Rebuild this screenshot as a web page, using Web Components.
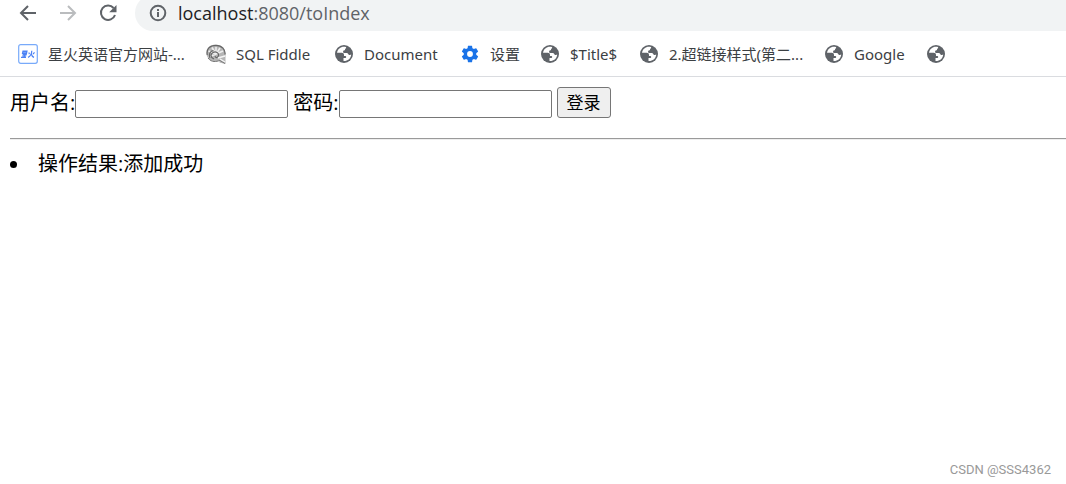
<!DOCTYPE html>
<html lang="zh-CN">
<head>
<meta charset="utf-8">
<title>localhost:8080/toIndex</title>
<style>
html, body { margin: 0; height: 100%; background: #fff; }
body { font-family: "Noto Sans", "Noto Sans CJK SC", sans-serif; }
</style>
</head>
<body>
<browser-window></browser-window>
<script>
const define = (name, html) => customElements.define(name, class extends HTMLElement {
  constructor() {
    super();
    this.attachShadow({ mode: "open" }).innerHTML = html;
  }
});

const icons = {
  back: '<svg viewBox="0 0 20 20"><path d="M18 10H3M10 3L3 10l7 7" fill="none" stroke="#5f6368" stroke-width="2"/></svg>',
  forward: '<svg viewBox="0 0 20 20"><path d="M2 10h15M10 3l7 7-7 7" fill="none" stroke="#babcbe" stroke-width="2"/></svg>',
  reload: '<svg viewBox="0 0 20 20"><path d="M15.600 5A7.200 7.200 0 1 0 17 12" fill="none" stroke="#5f6368" stroke-width="2"/><path d="M18.500 2v7.300h-7.300z" fill="#5f6368"/></svg>',
  info: '<svg viewBox="0 0 20 20"><circle cx="10" cy="10" r="7.300" fill="none" stroke="#5f6368" stroke-width="2"/><path d="M10 9v5M10 6v2" stroke="#5f6368" stroke-width="2"/></svg>',
  globe: '<svg viewBox="0 0 20 20"><circle cx="10" cy="10" r="9" fill="#5f6368"/><path d="M12 3C7.500 1.800 3.800 4.500 3 8.700h4.700c1.500 0 2.300.9 2.300 2.300v1h1.300c.6 0 .9.400.9 1s-.3 1-.9 1H9.500v3.100c4.300.2 7.600-2.700 7.700-6.500-.8.700-2 .6-2.700-.2-.6-.8-1.200-1.300-2.200-1.300h-1.800c-.9 0-1.400-.6-1.400-1.400 0-1 .6-1.500 1.500-1.500h.4V5.400c0-.6.300-.9.800-.9.400-.3.500-.9.200-1.500z" fill="#fff"/></svg>',
  gear: '<svg viewBox="0 0 24 24"><path fill="#1a73e8" d="M19.430 12.980c.040-.320.070-.640.070-.980s-.030-.660-.070-.980l2.110-1.650c.190-.150.240-.420.120-.640l-2-3.460c-.120-.220-.390-.300-.610-.220l-2.490 1c-.520-.400-1.080-.730-1.690-.980l-.380-2.650A.49.49 0 0 0 14 2h-4c-.250 0-.460.180-.490.420l-.380 2.650c-.610.250-1.170.590-1.690.980l-2.490-1c-.230-.090-.490 0-.610.220l-2 3.460c-.130.220-.070.490.120.640l2.110 1.650c-.040.320-.070.650-.070.980s.030.660.070.980l-2.110 1.650c-.190.150-.240.420-.120.640l2 3.460c.120.220.390.300.610.220l2.490-1c.520.400 1.080.730 1.690.980l.380 2.650c.030.240.240.420.490.420h4c.250 0 .460-.180.490-.420l.380-2.650c.610-.250 1.170-.590 1.690-.980l2.490 1c.230.090.490 0 .610-.220l2-3.460c.120-.220.070-.490-.120-.640zM12 15.500a3.500 3.500 0 1 1 0-7 3.500 3.500 0 0 1 0 7z"/></svg>',
  star: '<svg viewBox="0 0 20 20"><rect x=".7" y=".7" width="18.600" height="18.600" rx="2" fill="#fff" stroke="#78aafa" stroke-width="1.200"/><g fill="none" stroke="#4c82f5" stroke-width="1.200"><path d="M5 7h4l-.5 2.500h-4zM4.800 8.200h4M4.600 10.700h4.200M4.200 12h4M3 13.300h5M6.800 9.500l-.7 3.800M11 8.500l.3 1.700M16.500 8.300l-1.500 1.800M13.800 6.700q-.2 4.800-3.800 6.700M13.300 10q.7 2.600 2.700 3.400"/></g></svg>',
  shell: '<svg viewBox="0 0 20 20"><path d="M.8 11C-.8 4 4 .5 10 .8c7 .2 10 5 9.500 10V20l-6-1.500v-1.800C8 18.500 2 17 .8 11z" fill="#b5b5b5"/><path d="M10 10L2.500 7M10 10l-7 3M10 10L6 3.500M10 10V3M10 10l4-6M10 10l7-3" stroke="#eee" stroke-width="1.600"/><path d="M1.300 11C0 5 4 1.300 10 1.300s9.500 4.500 9 9.200M4 14C2.500 9.500 4.500 7 7.500 6.500M8 15c-3.500-1-4-5-1-6.500s6 .5 5.500 3-3 2.700-3.500.7" fill="none" stroke="#666" stroke-width="1.200"/><path d="M2 14c4 5 8 3.500 12 2.500l5 3" fill="none" stroke="#777"/><path d="M12 14l7-2M14 15l5 3" stroke="#f4f4f4" stroke-width="1.400"/></svg>'
};

customElements.define("ui-icon", class extends HTMLElement {
  constructor() {
    super();
    this.attachShadow({ mode: "open" }).innerHTML =
      `<style>:host{display:block;flex:none;width:20px;height:20px}svg{display:block;width:100%;height:100%}</style>${icons[this.getAttribute("name")]}`;
  }
});

define("nav-bar", `
<style>
:host { display: flex; align-items: center; height: 31px; padding-left: 18px; overflow: hidden; }
nav { display: flex; gap: 20px; margin-right: 17px; padding-bottom: 5px; }
button { all: unset; display: block; width: 20px; height: 20px; }
.address { flex: 1; display: flex; align-items: center; gap: 10px; height: 36px; margin-top: -5px; padding-left: 13px; background: #f1f3f4; border-radius: 18px 0 0 18px; }
.url { font-family: "Open Sans", sans-serif; font-size: 18px; line-height: 28px; color: #5f6368; white-space: nowrap; }
b { font-weight: 400; color: #202124; }
</style>
<nav>
<button aria-label="后退"><ui-icon name="back"></ui-icon></button>
<button aria-label="前进"><ui-icon name="forward"></ui-icon></button>
<button aria-label="刷新"><ui-icon name="reload"></ui-icon></button>
</nav>
<div class="address"><ui-icon name="info"></ui-icon><span class="url"><b>localhost</b>:8080/toIndex</span></div>`);

customElements.define("bookmark-link", class extends HTMLElement {
  constructor() {
    super();
    this.attachShadow({ mode: "open" }).innerHTML = `
<style>
:host { display: block; }
a { display: flex; align-items: center; gap: 10px; height: 32px; color: #3c4043; text-decoration: none; font-size: 15px; line-height: 20px; white-space: nowrap; }
</style>
<a href="#"><ui-icon name="${this.getAttribute("icon")}"></ui-icon><slot></slot></a>`;
  }
});

define("bookmark-bar", `
<style>
:host { display: grid; grid-template-columns: 188px 128px 126px 80px 99px 185px 102px 20px; padding: 7px 0 6px 18px; border-bottom: 1px solid #dadce0; }
</style>
<bookmark-link icon="star">星火英语官方网站-...</bookmark-link>
<bookmark-link icon="shell">SQL Fiddle</bookmark-link>
<bookmark-link icon="globe">Document</bookmark-link>
<bookmark-link icon="gear">设置</bookmark-link>
<bookmark-link icon="globe">$Title$</bookmark-link>
<bookmark-link icon="globe">2.超链接样式(第二...</bookmark-link>
<bookmark-link icon="globe">Google</bookmark-link>
<bookmark-link icon="globe"></bookmark-link>`);

define("login-form", `
<style>
:host { display: block; }
form { display: flex; align-items: flex-end; gap: 5px; line-height: 31px; }
.field { display: flex; align-items: flex-end; }
input { box-sizing: border-box; width: 213px; height: 28px; border: 1px solid #767676; border-radius: 2px; padding: 1px 2px; font: inherit; background: #fff; }
button { box-sizing: border-box; width: 54px; height: 31px; padding: 0; border: 1px solid #767676; border-radius: 3px; background: #efefef; color: #000; font: inherit; font-size: 17px; line-height: 29px; }
</style>
<form>
<div class="field"><label for="user">用户名:</label><input id="user" type="text"></div>
<div class="field"><label for="pass">密码:</label><input id="pass" type="password"></div>
<button type="button">登录</button>
</form>`);

define("page-content", `
<style>
:host { display: block; flex: 1; padding: 10px 0 0 10px; font-family: "Open Sans", "Noto Sans CJK SC", sans-serif; font-size: 20px; color: #000; }
hr { margin: 20px 0 10px; border: 0; border-top: 1px solid #9a9a9a; border-bottom: 1px solid #eee; }
ul { margin: 0; padding: 0; list-style: none; line-height: 28px; }
li { display: flex; align-items: center; gap: 21px; }
li::before { content: ""; width: 7px; height: 7px; border-radius: 50%; background: #000; }
</style>
<login-form></login-form>
<hr>
<ul><li>操作结果:添加成功</li></ul>`);

define("browser-window", `
<style>
:host { display: flex; flex-direction: column; min-height: 100%; }
footer { align-self: flex-end; padding: 0 15px 4px; font: 13px/20px Roboto, sans-serif; color: #999; }
</style>
<nav-bar></nav-bar>
<bookmark-bar></bookmark-bar>
<page-content></page-content>
<footer>CSDN @SSS4362</footer>`);
</script>
</body>
</html>
